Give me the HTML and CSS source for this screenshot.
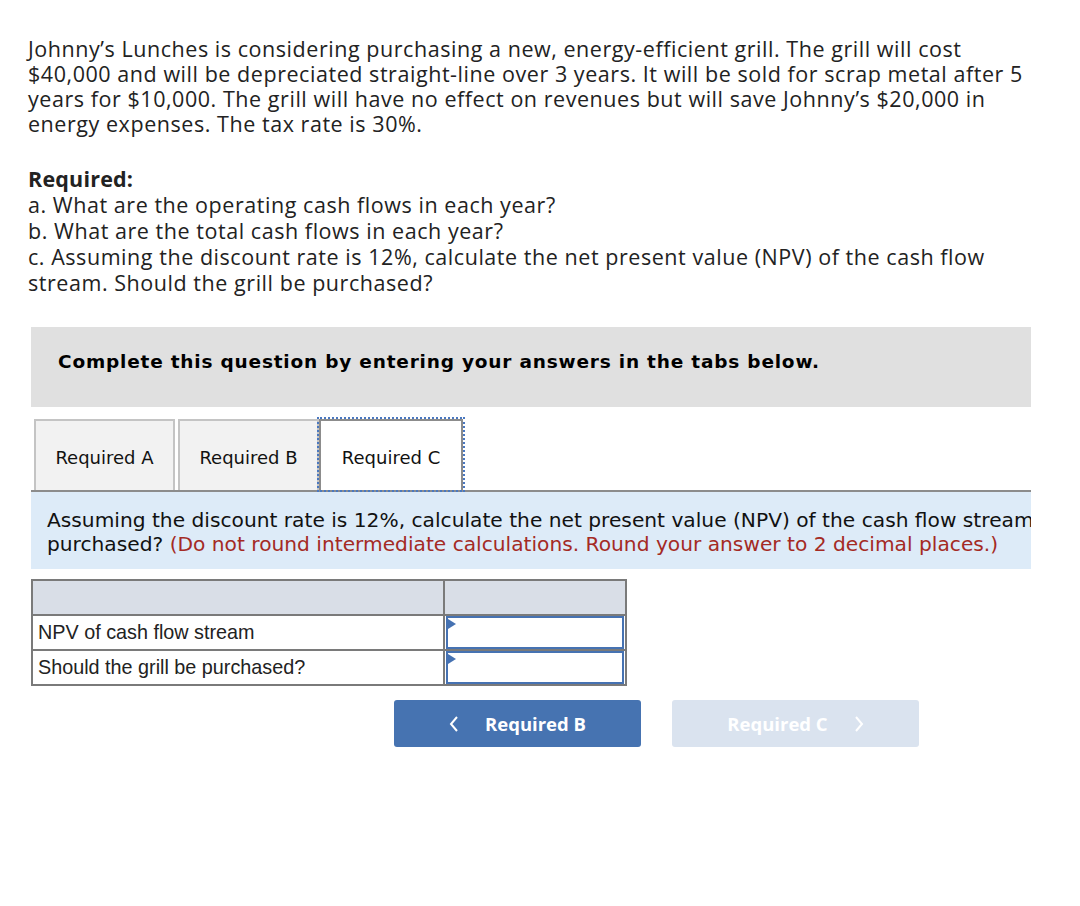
FILE: index.html
```html
<!DOCTYPE html>
<html>
<head>
<meta charset="utf-8">
<link rel="stylesheet" href="styles.css">
</head>
<body>
<div class="page">
  <div class="question">
    <p class="intro">Johnny’s Lunches is considering purchasing a new, energy-efficient grill. The grill will cost $40,000 and will be depreciated straight-line over 3 years. It will be sold for scrap metal after 5 years for $10,000. The grill will have no effect on revenues but will save Johnny’s $20,000 in energy expenses. The tax rate is 30%.</p>
    <p class="req"><b>Required:</b><br>a. What are the operating cash flows in each year?<br>b. What are the total cash flows in each year?<br>c. Assuming the discount rate is 12%, calculate the net present value (NPV) of the cash flow stream. Should the grill be purchased?</p>
  </div>
  <div class="block">
    <div class="banner">Complete this question by entering your answers in the tabs below.</div>
    <div class="tabs">
      <div class="tab">Required A</div>
      <div class="tab">Required B</div>
      <div class="tab active">Required C</div>
    </div>
    <div class="prompt">
      <div class="prompt-inner">Assuming the discount rate is 12%, calculate the net present value (NPV) of the cash flow stream. Should the grill be purchased? <span class="hint">(Do not round intermediate calculations. Round your answer to 2 decimal places.)</span></div>
    </div>
    <table class="grid">
      <tr class="head"><td class="c1"></td><td class="c2"></td></tr>
      <tr><td class="c1">NPV of cash flow stream</td><td class="c2 inp"><div class="field"></div></td></tr>
      <tr><td class="c1">Should the grill be purchased?</td><td class="c2 inp"><div class="field"></div></td></tr>
    </table>
    <div class="nav">
      <div class="btn prev"><svg class="chev" width="10" height="16" viewBox="0 0 10 16"><polyline points="8,1 2,8 8,15" fill="none" stroke="currentColor" stroke-width="2"/></svg><span>Required B</span></div>
      <div class="btn next"><span>Required C</span><svg class="chev" width="10" height="16" viewBox="0 0 10 16"><polyline points="2,1 8,8 2,15" fill="none" stroke="currentColor" stroke-width="2"/></svg></div>
    </div>
  </div>
</div>
</body>
</html>
```
FILE: styles.css
```css
html, body { margin: 0; padding: 0; background: #fff; }
.page { padding: 36px 0 0 0; }
.question { padding-left: 28px; font-family: "Open Sans", "Liberation Sans", sans-serif; font-size: 21.5px; letter-spacing: 0.55px; line-height: 25px; color: #222; }
.question p { margin: 0; width: 1005px; }
.req { margin-top: 30px !important; line-height: 26px; }
.req b { font-weight: 700; letter-spacing: 0.2px; }
.block { margin-left: 31px; width: 1000px; margin-top: 31px; }
.banner { background: #e0e0e0; height: 80px; box-sizing: border-box; padding: 24px 27px 0; font-family: "DejaVu Sans", Verdana, sans-serif; font-weight: bold; font-size: 18.5px; letter-spacing: 0.8px; color: #000; }
.tabs { display: flex; margin-top: 12px; padding-left: 3px; border-bottom: 2px solid #8c8c8c; height: 71px; }
.tab { width: 141px; box-sizing: border-box; border: 2px solid #c4c4c4; border-bottom: none; background: #f2f2f2; display: flex; align-items: center; justify-content: center; padding-top: 3px; font-family: "DejaVu Sans", Verdana, sans-serif; font-size: 18px; color: #111; margin-right: 3px; }
.tab.active { background: #fff; border: 2px solid #8c8c8c; border-bottom: none; outline: 2px dotted #4a78c0; outline-offset: 0; margin-right: 0; margin-left: -3px; width: 144px; }
.prompt { background: #ddebf8; height: 77px; overflow: hidden; margin-bottom: 10px; }
.prompt-inner { width: 1200px; padding: 16px 16px; font-family: "DejaVu Sans", Verdana, sans-serif; font-size: 20.2px; line-height: 24px; color: #111; }
.hint { color: #a42a24; }
.grid { border-collapse: collapse; width: 596px; font-family: "Liberation Sans", Arial, sans-serif; font-size: 19.8px; color: #222; }
.grid td { border: 2px solid #7a7a7a; padding: 0 5px; height: 33px; }
.grid .head td { background: #d9dee7; }
.grid .c1 { width: 400px; }
.grid .inp { padding: 0; }
.field { height: 33px; border: 2px solid #4672b2; box-sizing: border-box; margin: 0 1px; position: relative; background: #fff; }
.field::before { content: ""; position: absolute; left: 0; top: 1px; border-left: 8px solid #4672b2; border-top: 5px solid transparent; border-bottom: 5px solid transparent; }
.nav { display: flex; gap: 31px; margin-left: 363px; margin-top: 14px; }
.btn { width: 247px; height: 47px; border-radius: 3px; display: flex; align-items: center; justify-content: center; gap: 26px; font-family: "Open Sans", "Liberation Sans", sans-serif; font-weight: 700; font-size: 18.5px; color: #fff; }
.btn.prev { background: #4673b1; }
.btn.next { background: #dae3ef; color: #fff; }
.chev { display: block; }
```
